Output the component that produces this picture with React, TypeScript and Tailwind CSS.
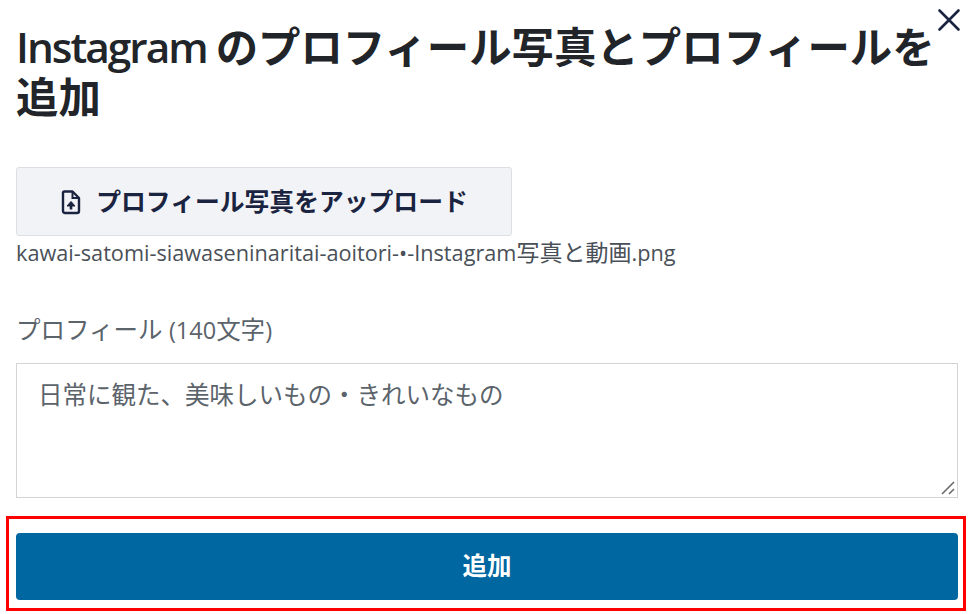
export default function App() {
  const jp = "font-['Open_Sans','Noto_Sans_CJK_JP',sans-serif]";
  return (
    <div className={`relative w-[974px] h-[614px] overflow-hidden bg-white ${jp}`}>
      <button className="absolute left-[934px] top-[5px] w-[30px] h-[30px] flex items-center justify-center text-[#1a2340]">
        <svg width="26" height="26" viewBox="0 0 26 26" fill="none" stroke="currentColor" strokeWidth="2.6" strokeLinecap="round"><path d="M3.5 3.5 22.5 22.5M22.5 3.5 3.5 22.5" /></svg>
      </button>
      <div className="flex flex-col pl-4 pr-4 pt-[22px]">
        <h1 className="text-[42.4px] leading-[50px] font-bold text-[#212529] w-[930px]">
          <span className="font-semibold tracking-[-2px]">Instagram </span>のプロフィール写真とプロフィールを追加
        </h1>
        <button className="mt-[45px] w-[496px] h-[69px] flex items-center justify-center gap-[16px] rounded-[3px] border border-[#dcdfe3] bg-[#f2f3f6] text-[24.8px] font-bold text-[#1a2340]">
          <svg className="translate-x-[1px]" width="20" height="26" viewBox="0 0 20 26" fill="none" stroke="currentColor"><path d="M3.5 2.5h8L18 9v13a2 2 0 0 1-2 2H4a2 2 0 0 1-2-2V4a1.5 1.5 0 0 1 1.5-1.5Z" strokeWidth="2.4" strokeLinejoin="round" /><path d="M11.5 2.5V9H18" strokeWidth="2" /><path d="M10 20.5v-7" strokeWidth="2.6" /><path d="M6 17 10 12.5 14 17Z" fill="currentColor" strokeWidth="1" /></svg>
          <span>プロフィール写真をアップロード</span>
        </button>
        <div className="text-[23px] leading-[32px] text-[#4a5058]"><span className="text-[21.7px]">kawai-satomi-siawaseninaritai-aoitori-•-Instagram</span>写真と動画<span className="text-[21.7px]">.png</span></div>
        <label className="mt-[43px] text-[24.5px] leading-[36px] text-[#5b636b]">プロフィール <span className="text-[23.5px]">(140</span>文字<span className="text-[23.5px]">)</span></label>
        <div className="relative mt-[15px] w-[942px] h-[135px]">
          <textarea readOnly defaultValue="日常に観た、美味しいもの・きれいなもの" className={`w-full h-full resize-none block border border-[#d4d4d4] pl-[21px] pt-[13px] text-[24.5px] leading-[36px] text-[#5b636b] outline-none ${jp}`} />
          <svg className="absolute right-[2px] bottom-[2px]" width="16" height="16" viewBox="0 0 16 16" fill="none" stroke="#6b6b6b" strokeWidth="1.6"><path d="M2 14 14 2M9 14 14 9" /></svg>
        </div>
        <div className="-ml-[10px] mt-[18px] w-[960px] h-[95px] border-[3px] border-[#ff0000] pl-[7px] pt-[14px]">
          <button className="w-[942px] h-[67px] rounded-[4px] bg-[#0067a0] text-[24.5px] font-bold text-white">追加</button>
        </div>
      </div>
    </div>
  );
}
